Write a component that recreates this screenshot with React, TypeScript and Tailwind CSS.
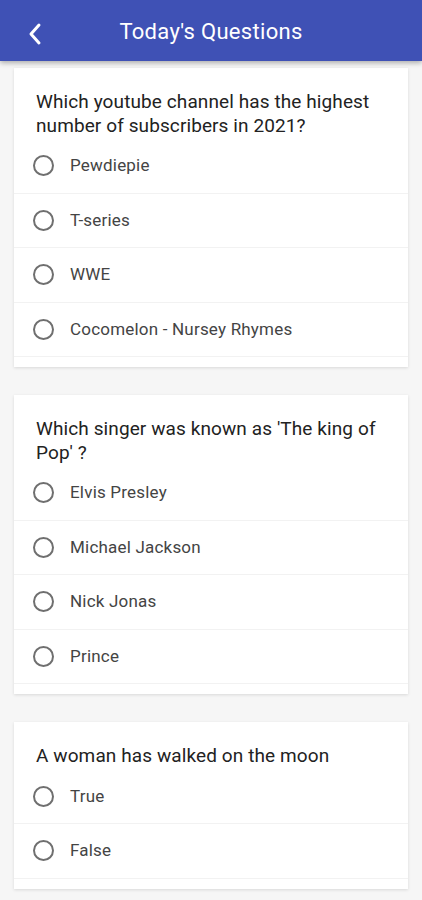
const questions = [
  {
    q: "Which youtube channel has the highest number of subscribers in 2021?",
    options: ["Pewdiepie", "T-series", "WWE", "Cocomelon - Nursey Rhymes"],
  },
  {
    q: "Which singer was known as 'The king of Pop' ?",
    options: ["Elvis Presley", "Michael Jackson", "Nick Jonas", "Prince"],
  },
  {
    q: "A woman has walked on the moon",
    options: ["True", "False"],
  },
];

function Radio() {
  return (
    <span className="box-border block h-[21px] w-[21px] shrink-0 rounded-full border-2 border-[#6f6f6f]" />
  );
}

function QuestionCard({ q, options }: { q: string; options: string[] }) {
  return (
    <div className="bg-white pt-[22px] pb-[10px] shadow-[0_1px_3px_rgba(0,0,0,0.12)]">
      <p className="mb-[2px] px-[22px] text-[19px] leading-[23.5px] tracking-[0.1px] text-[#222]">{q}</p>
      {options.map((o) => (
        <div
          key={o}
          className="flex h-[54.5px] items-center gap-[16px] border-b border-[#f2f2f2] pl-[19px]"
        >
          <Radio />
          <span className="text-[17px] tracking-[0.2px] text-[#444]">{o}</span>
        </div>
      ))}
    </div>
  );
}

export default function App() {
  return (
    <div className="min-h-[900px] bg-[#f6f6f6] font-['Roboto',sans-serif]">
      <header className="relative z-10 flex h-[61px] items-center justify-center bg-[#3f51b5] pt-[2px] shadow-[0_2px_5px_rgba(0,0,0,0.3)]">
        <button className="absolute left-[22px] top-[18px] p-1">
          <svg width="18" height="24" viewBox="0 0 18 24" fill="none">
            <path d="M13 3 L5 12 L13 21" stroke="white" strokeWidth="3" strokeLinecap="round" strokeLinejoin="round" />
          </svg>
        </button>
        <h1 className="text-[22px] tracking-[0.3px] text-white">Today's Questions</h1>
      </header>
      <main className="flex flex-col gap-[28px] px-[14px] pt-[7px]">
        {questions.map((item) => (
          <QuestionCard key={item.q} q={item.q} options={item.options} />
        ))}
      </main>
    </div>
  );
}
